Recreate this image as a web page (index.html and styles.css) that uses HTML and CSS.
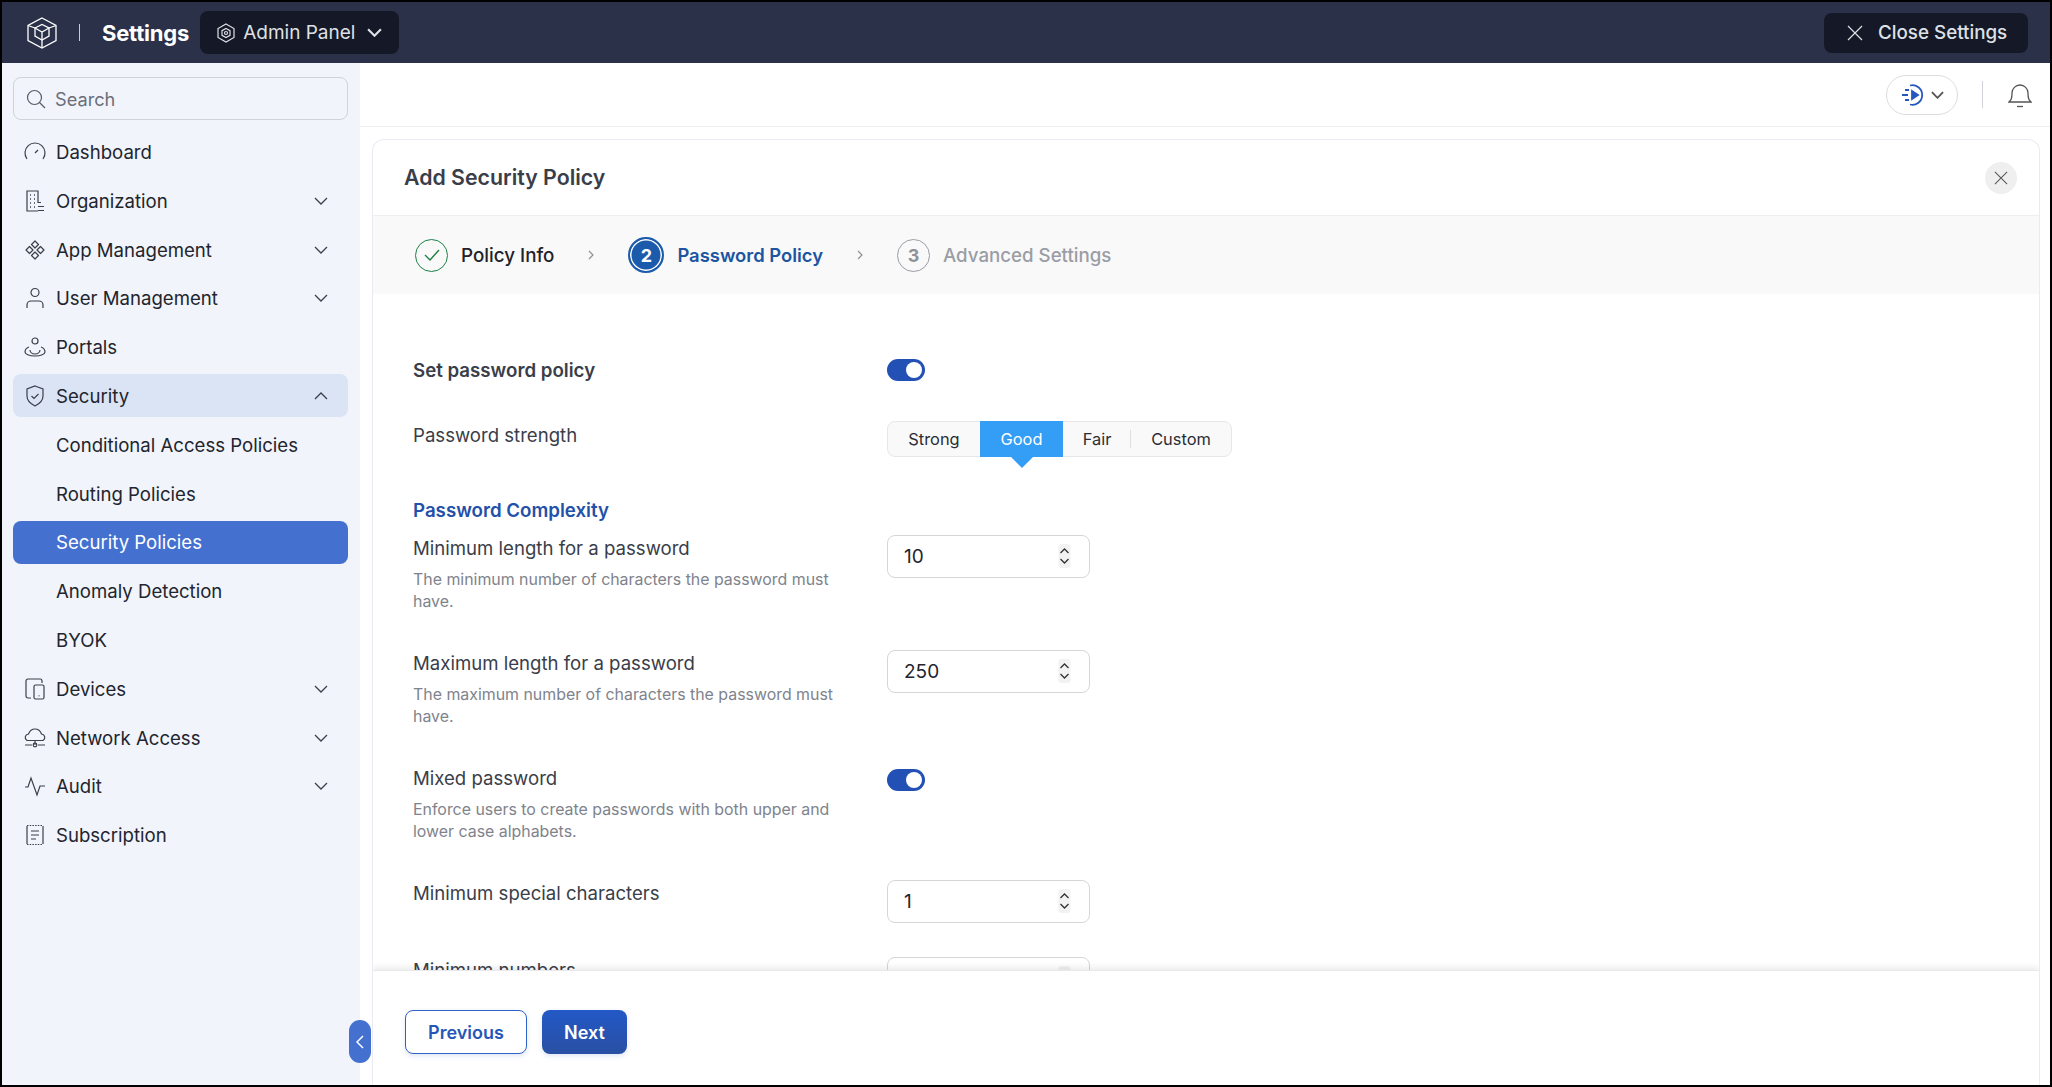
FILE: index.html
```html
<!DOCTYPE html>
<html lang="en">
<head>
    <meta charset="UTF-8">
    <title>Settings - Add Security Policy</title>
    <link rel="stylesheet" href="styles.css">
</head>
<body>
    <svg class="defs" width="0" height="0">
        <symbol id="chev-down" viewBox="0 0 14 8"><path d="M1 1l6 6 6-6" fill="none" stroke="currentColor" stroke-width="1.3"/></symbol>
        <symbol id="chev-up" viewBox="0 0 14 8"><path d="M1 7l6-6 6 6" fill="none" stroke="currentColor" stroke-width="1.3"/></symbol>
        <symbol id="cross" viewBox="0 0 16 16"><path d="M1 1l14 14M15 1L1 15" fill="none" stroke="currentColor" stroke-width="1.2"/></symbol>
        <symbol id="spin" viewBox="0 0 12 24">
            <rect width="12" height="24" rx="3" fill="#f2f2f2"/>
            <path d="M2 9l4-4 4 4M2 15l4 4 4-4" fill="none" stroke="#333" stroke-width="1.3"/>
        </symbol>
    </svg>

    <div class="app">
        <header class="topbar">
            <svg class="logo" viewBox="0 0 30 32" fill="none" stroke="#fff" stroke-width="1.3">
                <path d="M15 1l14 7.500v15L15 31 1 23.500v-15z"/>
                <path d="M8 11l7-3.500 7 3.500v8l-7 4-7-4z"/>
                <path d="M8 11l7 4 7-4M15 15v16M1 8.500L8 11M29 8.500L22 11"/>
            </svg>
            <span class="topbar-sep"></span>
            <span class="topbar-title">Settings</span>
            <button class="admin-btn">
                <svg class="admin-icon" viewBox="0 0 18 20" fill="none" stroke="#dfe1e6" stroke-width="1.2">
                    <path d="M9 1l8 4.500v9L9 19l-8-4.500v-9z"/>
                    <path d="M9 5.500l4 2.200v4.600l-4 2.200-4-2.200V7.700z"/>
                    <circle cx="9" cy="10" r="1.500"/>
                </svg>
                <span>Admin Panel</span>
                <svg class="admin-chev" viewBox="0 0 14 8"><path d="M1 1l6 6 6-6" fill="none" stroke="currentColor" stroke-width="2"/></svg>
            </button>
            <button class="close-settings">
                <svg class="close-x"><use href="#cross"/></svg>
                <span>Close Settings</span>
            </button>
        </header>

        <div class="body-wrap">
            <aside class="sidebar">
                <div class="search">
                    <svg class="search-icon" viewBox="0 0 20 20" fill="none" stroke="#555b68" stroke-width="1.2"><circle cx="8.500" cy="8.500" r="7"/><path d="M13.500 13.500L19 19"/></svg>
                    <span>Search</span>
                </div>
                <nav class="nav">
                    <a class="nav-item">
                        <svg class="nav-icon" viewBox="0 0 22 22" fill="none" stroke="currentColor" stroke-width="1.2"><path d="M3 18a10 10 0 1 1 16 0"/><path d="M11 12l3-3"/></svg>
                        <span>Dashboard</span>
                    </a>
                    <a class="nav-item">
                        <svg class="nav-icon" viewBox="0 0 22 22" fill="none" stroke="currentColor" stroke-width="1.2"><path d="M14 21H3V1h11v12"/><path d="M14 12.500h3M14 16.500h6M14 20.500h6"/><path d="M6 5h1M10 5h1M6 9h1M10 9h1M6 13h1M10 13h1M6 17h1M10 17h1" stroke-width="1.600"/></svg>
                        <span>Organization</span>
                        <svg class="nav-chev"><use href="#chev-down"/></svg>
                    </a>
                    <a class="nav-item">
                        <svg class="nav-icon" viewBox="0 0 22 22" fill="none" stroke="currentColor" stroke-width="1.2"><path d="M11 2l3.500 3.500L11 9 7.500 5.500zM11 13l3.500 3.500L11 20l-3.500-3.500zM5.500 7.500L9 11l-3.500 3.500L2 11zM16.500 7.500L20 11l-3.500 3.500L13 11z" stroke-linejoin="round"/></svg>
                        <span>App Management</span>
                        <svg class="nav-chev"><use href="#chev-down"/></svg>
                    </a>
                    <a class="nav-item">
                        <svg class="nav-icon" viewBox="0 0 22 22" fill="none" stroke="currentColor" stroke-width="1.2"><circle cx="11" cy="5.500" r="4"/><path d="M3 21v-3a4 4 0 0 1 4-4h8a4 4 0 0 1 4 4v3"/></svg>
                        <span>User Management</span>
                        <svg class="nav-chev"><use href="#chev-down"/></svg>
                    </a>
                    <a class="nav-item">
                        <svg class="nav-icon" viewBox="0 0 22 22" fill="none" stroke="currentColor" stroke-width="1.2"><circle cx="11" cy="5" r="3"/><path d="M5 11c-3 1-4 3-4 5 0 2 4 4 10 4s10-2 10-4c0-2-1-4-4-5"/><path d="M6 14a5 4 0 0 0 10 0"/></svg>
                        <span>Portals</span>
                    </a>
                    <a class="nav-item nav-open">
                        <svg class="nav-icon" viewBox="0 0 22 22" fill="none" stroke="currentColor" stroke-width="1.2"><path d="M11 1l8 3v7c0 5-4 8-8 10-4-2-8-5-8-10V4z"/><path d="M7.500 11l2.500 2.500 4.500-4.500"/></svg>
                        <span>Security</span>
                        <svg class="nav-chev"><use href="#chev-up"/></svg>
                    </a>
                    <a class="nav-item nav-sub">Conditional Access Policies</a>
                    <a class="nav-item nav-sub">Routing Policies</a>
                    <a class="nav-item nav-sub nav-active">Security Policies</a>
                    <a class="nav-item nav-sub">Anomaly Detection</a>
                    <a class="nav-item nav-sub">BYOK</a>
                    <a class="nav-item">
                        <svg class="nav-icon" viewBox="0 0 22 22" fill="none" stroke="currentColor" stroke-width="1.2"><path d="M7 20H4a2 2 0 0 1-2-2V3a2 2 0 0 1 2-2h12a2 2 0 0 1 2 2v2"/><rect x="10" y="7" width="10" height="14" rx="1.500"/><path d="M15 17.500v.8" stroke-width="1.500"/></svg>
                        <span>Devices</span>
                        <svg class="nav-chev"><use href="#chev-down"/></svg>
                    </a>
                    <a class="nav-item">
                        <svg class="nav-icon" viewBox="0 0 22 22" fill="none" stroke="currentColor" stroke-width="1.2"><path d="M3 13.500c-3-2-2-6 1.500-6.500C6 3 9 2 11 2s5 1 6.500 5c3.500.5 4.500 4.500 1.500 6.500z"/><path d="M11 14v4M1 18h7M14 18h7"/><circle cx="11" cy="18" r="1.800"/></svg>
                        <span>Network Access</span>
                        <svg class="nav-chev"><use href="#chev-down"/></svg>
                    </a>
                    <a class="nav-item">
                        <svg class="nav-icon" viewBox="0 0 22 22" fill="none" stroke="currentColor" stroke-width="1.2"><path d="M1 12h3l3-9 6 17 3-9h5"/></svg>
                        <span>Audit</span>
                        <svg class="nav-chev"><use href="#chev-down"/></svg>
                    </a>
                    <a class="nav-item">
                        <svg class="nav-icon" viewBox="0 0 22 22" fill="none" stroke="currentColor" stroke-width="1.2"><path d="M3 20V2M19 2v18"/><path d="M3 1.500h16M3 20.500h16" stroke-dasharray="1.500 1.200"/><path d="M7 7h8M7 11h8M7 15h5"/></svg>
                        <span>Subscription</span>
                    </a>
                </nav>
                <button class="collapse">
                    <svg viewBox="0 0 8 14" width="8" height="14"><path d="M7 1L1 7l6 6" fill="none" stroke="#fff" stroke-width="1.500"/></svg>
                </button>
            </aside>

            <main class="main">
                <div class="main-head">
                    <div class="play-pill">
                        <svg class="play-icon" viewBox="0 0 23 22" fill="none" stroke="#2657c1" stroke-width="1.800">
                            <path d="M9 1.500a9.800 9.800 0 1 1 0 19"/>
                            <path d="M4 6h4M1 11h6M4 16h4"/>
                            <path d="M11 7l6 4-6 4z" fill="#2657c1"/>
                        </svg>
                        <svg class="pill-chev" viewBox="0 0 14 8"><path d="M1 1l6 6 6-6" fill="none" stroke="currentColor" stroke-width="2"/></svg>
                    </div>
                    <span class="head-sep"></span>
                    <svg class="bell" viewBox="0 0 24 26" fill="none" stroke="#555" stroke-width="1.300">
                        <path d="M1 20c2-2 3-3 3-9a8 8 0 0 1 16 0c0 6 1 7 3 9z"/>
                        <path d="M9 24.500h6"/>
                    </svg>
                </div>

                <section class="card">
                    <div class="card-head">
                        <h1>Add Security Policy</h1>
                        <button class="card-close"><svg><use href="#cross"/></svg></button>
                    </div>
                    <div class="steps">
                        <div class="step">
                            <span class="step-circle step-done">
                                <svg viewBox="0 0 16 12" width="16" height="12"><path d="M1 6l5 5 9-10" fill="none" stroke="#1d7f46" stroke-width="1.400"/></svg>
                            </span>
                            <span class="step-label">Policy Info</span>
                        </div>
                        <svg class="step-chev" viewBox="0 0 6 10"><path d="M1 1l4 4-4 4" fill="none" stroke="currentColor" stroke-width="1.200"/></svg>
                        <div class="step">
                            <span class="step-circle step-current">2</span>
                            <span class="step-label step-label-current">Password Policy</span>
                        </div>
                        <svg class="step-chev" viewBox="0 0 6 10"><path d="M1 1l4 4-4 4" fill="none" stroke="currentColor" stroke-width="1.200"/></svg>
                        <div class="step">
                            <span class="step-circle step-next">3</span>
                            <span class="step-label step-label-next">Advanced Settings</span>
                        </div>
                    </div>

                    <div class="form">
                        <div class="row row-toggle-head">
                            <div class="row-text"><div class="label label-strong">Set password policy</div></div>
                            <span class="toggle"></span>
                        </div>
                        <div class="row row-strength">
                            <div class="row-text"><div class="label">Password strength</div></div>
                            <div class="segments">
                                <span class="seg seg-strong">Strong</span>
                                <span class="seg seg-good">Good</span>
                                <span class="seg seg-fair">Fair</span>
                                <span class="seg seg-custom">Custom</span>
                            </div>
                        </div>
                        <h2 class="section-title">Password Complexity</h2>
                        <div class="row">
                            <div class="row-text">
                                <div class="label">Minimum length for a password</div>
                                <p class="help">The minimum number of characters the password must have.</p>
                            </div>
                            <div class="num-input"><span>10</span><svg class="spin"><use href="#spin"/></svg></div>
                        </div>
                        <div class="row">
                            <div class="row-text">
                                <div class="label">Maximum length for a password</div>
                                <p class="help">The maximum number of characters the password must have.</p>
                            </div>
                            <div class="num-input"><span>250</span><svg class="spin"><use href="#spin"/></svg></div>
                        </div>
                        <div class="row">
                            <div class="row-text">
                                <div class="label">Mixed password</div>
                                <p class="help">Enforce users to create passwords with both upper and lower case alphabets.</p>
                            </div>
                            <span class="toggle toggle-mid"></span>
                        </div>
                        <div class="row row-tight">
                            <div class="row-text"><div class="label">Minimum special characters</div></div>
                            <div class="num-input"><span>1</span><svg class="spin"><use href="#spin"/></svg></div>
                        </div>
                        <div class="row">
                            <div class="row-text"><div class="label">Minimum numbers</div></div>
                            <div class="num-input"><span>1</span><svg class="spin"><use href="#spin"/></svg></div>
                        </div>
                    </div>

                    <div class="card-foot">
                        <button class="btn btn-outline">Previous</button>
                        <button class="btn btn-primary">Next</button>
                    </div>
                </section>
            </main>
        </div>
    </div>
</body>
</html>
```

FILE: styles.css
```css
* { box-sizing: border-box; }
html, body { margin: 0; height: 100%; }
body { background: #000; font-family: Inter, "Noto Sans", sans-serif; color: #22252e; overflow: hidden; }
button { font-family: inherit; border: 0; cursor: pointer; }
.defs { position: absolute; }

.app { width: 2048px; height: 1083px; margin: 2px; background: #fff; display: flex; flex-direction: column; overflow: hidden; }

/* top bar */
.topbar { height: 61px; flex: none; background: #2a3149; display: flex; align-items: center; padding: 0 22px 0 25px; color: #fff; }
.logo { width: 30px; height: 32px; }
.topbar-sep { width: 1px; height: 17px; background: #c8ccd6; margin-left: 22px; }
.topbar-title { font-size: 22px; font-weight: 700; margin-left: 22px; letter-spacing: -0.2px; }
.admin-btn { height: 43px; width: 199px; margin-left: 11px; background: #141827; color: #dfe1e6; border-radius: 8px; display: flex; align-items: center; padding: 0 0 0 17px; font-size: 19px; white-space: nowrap; }
.admin-icon { width: 18px; height: 20px; margin-right: 8px; flex: none; }
.admin-chev { width: 15px; height: 9px; margin-left: 12px; flex: none; }
.close-settings { margin-left: auto; height: 40px; width: 204px; background: #141827; color: #dfe1e6; border-radius: 8px; display: flex; align-items: center; padding: 0 0 0 23px; font-size: 18.8px; font-weight: 500; white-space: nowrap; }
.close-x { width: 16px; height: 16px; margin-right: 15px; flex: none; }

.body-wrap { flex: 1; display: flex; min-height: 0; }

/* sidebar */
.sidebar { width: 358px; flex: none; background: #f1f4fa; padding: 14px 12px 0 11px; position: relative; }
.search { height: 43px; border: 1px solid #cfd3da; border-radius: 8px; display: flex; align-items: center; padding-left: 12px; font-size: 18.2px; color: #6a6f7b; }
.search-icon { width: 20px; height: 20px; margin-right: 9px; }
.nav { margin-top: 10.5px; display: flex; flex-direction: column; gap: 5.8px; }
.nav-item { height: 43px; flex: none; display: flex; align-items: center; padding-left: 11px; padding-right: 20px; border-radius: 8px; font-size: 18.6px; color: #22252e; }
.nav-icon { width: 22px; height: 22px; margin-right: 10px; color: #3b3f4a; flex: none; }
.nav-chev { width: 14px; height: 8px; margin-left: auto; color: #3b3f4a; }
.nav-open { background: #dbe4f5; }
.nav-sub { padding-left: 43px; }
.nav-active { background: #4470d0; color: #fff; }
.collapse { position: absolute; right: -11px; bottom: 22px; width: 22px; height: 43px; padding: 0; background: #4470d0; border-radius: 11px; display: flex; align-items: center; justify-content: center; z-index: 2; }

/* main */
.main { flex: 1; min-width: 0; display: flex; flex-direction: column; padding: 0 10px 0 12px; }
.main-head { height: 64px; flex: none; margin: 0 -10px 0 -12px; border-bottom: 1px solid #eceef2; display: flex; align-items: center; justify-content: flex-end; padding: 0 18px 0 0; }
.play-pill { width: 72px; height: 40px; border: 1px solid #dcdde0; border-radius: 20px; display: flex; align-items: center; padding-left: 14px; }
.play-icon { width: 23px; height: 22px; flex: none; }
.pill-chev { width: 13px; height: 8px; margin-left: 7px; color: #555; flex: none; }
.head-sep { width: 1px; height: 27px; background: #cfd2d8; margin-left: 24px; margin-right: 25px; }
.bell { width: 24px; height: 26px; }

.card { flex: 1; min-height: 0; margin-top: 12px; border: 1px solid #e8ebf4; border-bottom: 0; border-radius: 12px 12px 0 0; display: flex; flex-direction: column; overflow: hidden; }
.card-head { height: 76px; flex: none; display: flex; align-items: center; justify-content: space-between; padding: 0 22px 0 31px; border-bottom: 1px solid #eeeff2; }
.card-head h1 { margin: 0 0 2px; font-size: 21.3px; font-weight: 600; color: #3a3e49; }
.card-close { width: 32px; height: 32px; border-radius: 50%; background: #efefef; padding: 0; color: #555; display: flex; align-items: center; justify-content: center; }
.card-close svg { width: 14px; height: 14px; }

.steps { height: 78px; flex: none; background: #f9f9f9; display: flex; align-items: center; padding-left: 42px; }
.step { display: flex; align-items: center; gap: 13px; }
.step-circle { width: 33px; height: 33px; border-radius: 50%; display: flex; align-items: center; justify-content: center; font-size: 18px; font-weight: 700; flex: none; }
.step-done { border: 1px solid #1d7f46; }
.step-current { width: 36px; height: 36px; background: #1c5bab; color: #fff; border: 2px solid #1c5bab; box-shadow: inset 0 0 0 1.5px #fff; }
.step-next { border: 1px solid #9a9da5; color: #8f929a; }
.step-label { font-size: 18.8px; font-weight: 500; color: #1f2229; }
.step-label-current { font-size: 18.4px; color: #1c55a0; font-weight: 600; }
.step-label-next { font-size: 18.7px; color: #9a9da5; }
.step-chev { width: 6px; height: 10px; margin: 0 34px; color: #8e9198; }

/* form */
.form { flex: 1; min-height: 0; overflow: hidden; padding: 64px 0 0 40px; }
.row { display: flex; align-items: flex-start; margin-bottom: 37px; }
.row-tight { margin-bottom: 34px; }
.row-text { width: 474px; flex: none; }
.label { font-size: 18.6px; line-height: 26px; color: #3a3e49; }
.label-strong { font-size: 18.7px; font-weight: 600; }
.help { margin: 8px 0 0; width: 440px; font-size: 15.9px; line-height: 22px; color: #80838c; }
.row-toggle-head { margin-bottom: 39px; }
.row-strength { margin-bottom: 41px; }
.row-strength .label { margin-top: -1px; }
.section-title { margin: 0 0 10.5px; font-size: 18.7px; line-height: 26px; font-weight: 600; color: #2350a8; }

.toggle { width: 38px; height: 22px; border-radius: 11px; background: #2350b5; position: relative; flex: none; margin-top: 1px; }
.toggle::after { content: ""; position: absolute; right: 3px; top: 3px; width: 16px; height: 16px; border-radius: 50%; background: #fff; }
.toggle-mid { margin-top: 4px; }

.segments { display: flex; height: 36px; border: 1px solid #e6e7ea; border-radius: 8px; background: #f9f9f9; position: relative; margin-top: -2px; }
.seg { display: flex; align-items: center; justify-content: center; font-size: 16.4px; color: #2a2d35; height: 100%; }
.seg-strong { width: 92px; }
.seg-good { width: 83px; background: #349df5; color: #fff; position: relative; margin-top: -1px; height: 36px; }
.seg-good::after { content: ""; position: absolute; left: 50%; top: 100%; margin-left: -11px; border: 11px solid transparent; border-top-color: #349df5; border-bottom: 0; }
.seg-fair { width: 68px; position: relative; }
.seg-fair::after { content: ""; position: absolute; right: 0; top: 8px; bottom: 8px; width: 1px; background: #dedfe3; }
.seg-custom { width: 100px; }

.num-input { width: 203px; height: 43px; border: 1px solid #d5d6da; border-radius: 8px; display: flex; align-items: center; justify-content: space-between; padding: 0 16px 0 16px; font-size: 19px; color: #22252e; background: #fff; flex: none; }
.spin { width: 17px; height: 24px; }

.card-foot { height: 115px; flex: none; background: #fff; border-top: 1px solid #e9e9ec; box-shadow: 0 -3px 6px rgba(0,0,0,0.08); display: flex; align-items: flex-start; gap: 15px; padding: 39px 0 0 32px; position: relative; }
.btn { height: 44px; border-radius: 8px; font-size: 18px; font-weight: 600; padding: 0; box-shadow: 0 2px 5px rgba(40,80,180,0.15); }
.btn-outline { width: 122px; background: #fff; border: 1.5px solid #2f62c8; color: #2657b8; }
.btn-primary { width: 85px; background: linear-gradient(#2358c6, #2850a4); color: #fff; }
```
